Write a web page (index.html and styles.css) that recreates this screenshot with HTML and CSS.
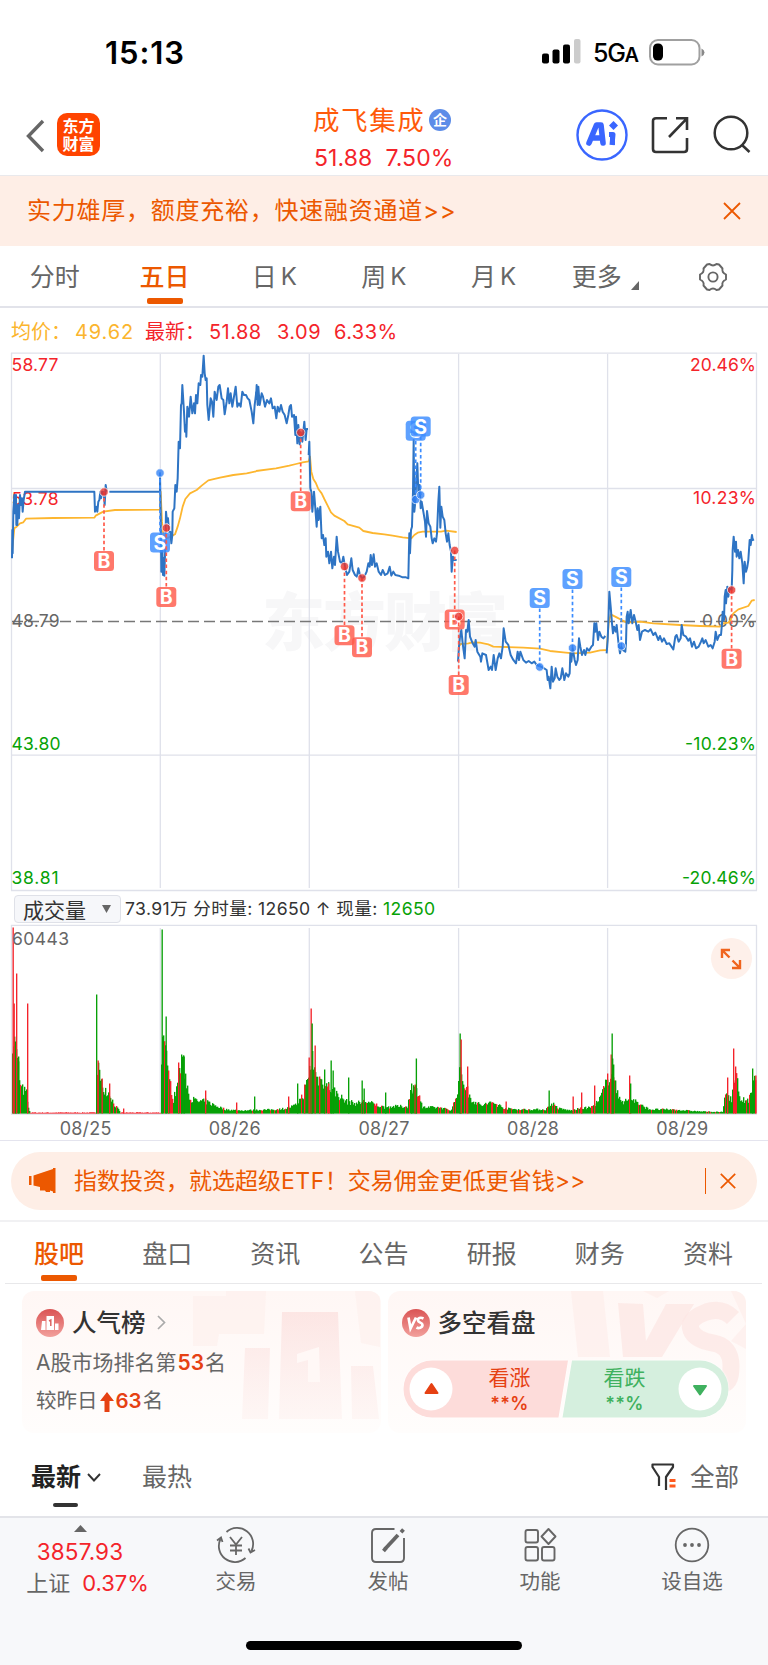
FILE: index.html
```html
<!DOCTYPE html>
<html lang="zh-CN">
<head>
<meta charset="utf-8">
<title>成飞集成</title>
<link rel="stylesheet" href="styles.css">
</head>
<body>
<header class="status">
  <span class="time">15:13</span>
  <div class="status-right">
    <svg class="signal" width="39" height="25" viewBox="0 0 39 25"><rect x="0" y="14.500" width="7" height="10" rx="2"/><rect x="10.500" y="10.500" width="7" height="14" rx="2"/><rect x="21" y="5.500" width="7" height="19" rx="2"/><rect x="32" y="0" width="6.500" height="24.500" rx="2" fill="#ccc"/></svg>
    <span class="net">5G<small>A</small></span>
    <svg width="56" height="27" viewBox="0 0 56 27"><rect x="1" y="1" width="49.500" height="24.500" rx="8" fill="none" stroke="#a0a0a0" stroke-width="2"/><rect x="4" y="4.500" width="10" height="17" rx="4.500"/><path d="M52.500 9.500q3 1.500 3 4t-3 4z" fill="#888"/></svg>
  </div>
</header>

<nav class="nav">
  <svg class="back" width="20" height="34" viewBox="0 0 20 34"><path d="M18 2 3.500 17 18 32" fill="none" stroke="#666" stroke-width="3.400"/></svg>
  <div class="brand"><span>东方</span><span>财富</span></div>
  <div class="title">
    <div class="name">成飞集成<i class="ent">企</i></div>
    <div class="quote"><span>51.88</span><span>7.50%</span></div>
  </div>
  <svg class="ai" width="52" height="52" viewBox="0 0 52 52"><circle cx="26" cy="26" r="24.500" fill="#fff" stroke="#3a66ff" stroke-width="2.400"/><path d="M13 34 20.500 16h4.500L27 34M16.500 29h9" fill="none" stroke="#3a66ff" stroke-width="5.600" stroke-linecap="round" stroke-linejoin="round"/><path d="M33 25.500h4L36 36M36.500 26v10" fill="none" stroke="#3a66ff" stroke-width="5" stroke-linejoin="round"/><path d="M37.500 12l4.500 4.500-4.500 4.500-4.500-4.500z" fill="#3a66ff"/></svg>
  <svg class="share" width="38" height="38" viewBox="0 0 38 38" fill="none" stroke="#333" stroke-width="2.600"><path d="M16 2.300H5Q2 2.300 2 5v28q0 3 3 3h28q3 0 3-3V22"/><path d="M25 2.300h11V14M36 2.300 18 21"/></svg>
  <svg class="search" width="38" height="38" viewBox="0 0 38 38" fill="none" stroke="#333" stroke-width="2.500"><circle cx="18" cy="18" r="16.300"/><path d="m29 30 7.500 7"/></svg>
</nav>

<section class="banner">
  <span>实力雄厚，额度充裕，快速融资通道&gt;&gt;</span>
  <svg width="18" height="18" viewBox="0 0 18 18"><path d="M1 1l16 16M17 1 1 17" stroke="#ec5800" stroke-width="1.800"/></svg>
</section>

<nav class="periods">
  <a>分时</a><a class="on">五日</a><a>日<b>K</b></a><a>周<b>K</b></a><a>月<b>K</b></a>
  <a class="more">更多<svg width="8" height="9" viewBox="0 0 8 9"><path d="M8 0v9H0z" fill="#666"/></svg></a>
  <a><svg width="30" height="30" viewBox="0 0 30 30" fill="none" stroke="#666" stroke-width="1.900" stroke-linejoin="round"><path d="M9 2.500 11.500 2Q15 4.800 18.500 2L21 2.500 24.500 6.500Q23.500 10.500 28 12.500V17.500Q23.500 19.500 24.500 23.500L21 27.500 18.500 28Q15 25.200 11.500 28L9 27.500 5.500 23.500Q6.500 19.500 2 17.500V12.500Q6.500 10.500 5.500 6.500Z"/><circle cx="15" cy="15" r="4.600"/></svg></a>
</nav>

<div class="legend"><span class="avg">均价：</span><span class="avg v1">49.62</span><span>最新：</span><span class="v2">51.88</span><span class="v3">3.09</span><span>6.33%</span></div>

<svg class="price" id="price" width="768" height="541" viewBox="0 351 768 541">
  <text x="508" y="645" text-anchor="end" class="mark" textLength="246">东方财富</text>
  <g class="grid"><path d="M11.500 353V890.500M160.300 354V888M309.300 354V888M458.600 354V888M607.600 354V888M756.500 353V890.500M11 353.200H757M12 488.500H756M12 755.200H756M11 890.500H757"/></g>
  <path d="M12 621.500H756" stroke="#777" stroke-width="1.300" stroke-dasharray="11 5"/>
  <g class="axis">
    <g class="up"><text x="11.500" y="370.500" textLength="47">58.77</text><text x="11.500" y="504.500" textLength="47">53.78</text><text x="756" y="370.500" text-anchor="end" textLength="66">20.46%</text><text x="756" y="504" text-anchor="end" textLength="63">10.23%</text></g>
    <g class="flat"><text x="11.500" y="627" textLength="48">48.79</text><text x="756" y="627" text-anchor="end" textLength="54">0.00%</text></g>
    <g class="down"><text x="11.500" y="750" textLength="49">43.80</text><text x="11.500" y="884" textLength="47">38.81</text><text x="756" y="750" text-anchor="end" textLength="71">-10.23%</text><text x="756" y="884" text-anchor="end" textLength="74">-20.46%</text></g>
  </g>
  <g id="lines"></g>
  <g id="trades"></g>
</svg>

<div class="volbar">
  <button class="pick">成交量<svg width="9" height="8" viewBox="0 0 9 8"><path d="M0 0h9L4.500 8z" fill="#666"/></svg></button>
  <span>73.91万 分时量: 12650 ↑ 现量: <em>12650</em></span>
</div>

<div class="volume">
  <svg id="volume" width="768" height="192" viewBox="0 924 768 192">
    <g class="grid"><path d="M11.500 925V1114M160.300 928V1113M309.300 928V1113M458.600 928V1113M607.600 928V1113M756.500 925V1114M11 925.400H757M11 1114H757"/></g>
    <g id="bars"></g>
    <text x="12" y="945" textLength="57" class="peak">60443</text>
  </svg>
  <div class="expand"><svg width="22" height="22" viewBox="0 0 22 22" fill="none" stroke="#f0641e" stroke-width="2.400"><path d="M2 10V2h8M2 2l7.500 7.500M20 12v8h-8M20 20l-7.500-7.500"/></svg></div>
</div>
<div class="dates"><span>08/25</span><span>08/26</span><span>08/27</span><span>08/28</span><span>08/29</span></div>

<section class="promo">
  <div class="pill">
    <svg class="horn" width="28" height="26" viewBox="0 0 28 26" fill="#ec5800"><path d="M1 8h2.500v9H1zM5.500 7.500 25 1V0h2.500v25H25v-1.500l-3-1V24h-4l-1-1.500h-5V19L5.500 17.500z"/></svg>
    <span>指数投资，就选超级<b>ETF</b>！交易佣金更低更省钱&gt;&gt;</span>
    <i></i>
    <svg width="16" height="16" viewBox="0 0 16 16"><path d="M.8.8l14.400 14.400M15.200.8.8 15.200" stroke="#ec5800" stroke-width="1.700"/></svg>
  </div>
</section>

<nav class="tabs"><a class="on">股吧</a><a>盘口</a><a>资讯</a><a>公告</a><a>研报</a><a>财务</a><a>资料</a></nav>

<section class="cards">
  <article class="card">
    <svg class="deco" width="358" height="142" viewBox="0 0 358 142">
      <defs><linearGradient id="fade" x1="0" y1="0" x2="0" y2="1"><stop offset="0" stop-color="#fbdedc" stop-opacity=".7"/><stop offset="1" stop-color="#fdf0ee" stop-opacity=".5"/></linearGradient></defs>
      <g fill="#fdeeeb" opacity=".55"><path d="M171 5h33V0h40l-2 43h-45l-2 12h-24zM333 0h25v56l-19-4z"/></g>
      <path fill="url(#fade)" d="M223 57h25l-2 71h-26zM260 21h56l4 107h-63zM329 75h22l6 53h-27z"/>
      <path fill="#fff8f6" d="m275 63 22-7 1 35h-12V69l-11 3z"/>
    </svg>
    <h3><svg width="28" height="28" viewBox="0 0 28 28"><defs><linearGradient id="red" x1="0" y1="0" x2="0" y2="1"><stop stop-color="#da5454"/><stop offset="1" stop-color="#f2a09c"/></linearGradient></defs><circle cx="14" cy="14" r="14" fill="url(#red)"/><path fill="#fff" d="M6 12h3.500v9H5zM10.500 7h7.500v14h-7.500zM19 14.500h3.500V21H19z"/><path d="m13 12 1.800-1v6" fill="none" stroke="#dc6462" stroke-width="1.500"/></svg><span>人气榜</span><svg class="go" width="9" height="15" viewBox="0 0 9 15"><path d="m1 1 6.500 6.500L1 14" fill="none" stroke="#aaa" stroke-width="1.700"/></svg></h3>
    <p>A股市场排名第<b>53</b>名</p>
    <p class="second">较昨日<svg width="14" height="20" viewBox="0 0 14 20"><path d="M7 0l7 9H9.500v11h-5V9H0z" fill="#e64113"/></svg><b>63</b>名</p>
  </article>
  <article class="card duel">
    <svg class="deco" width="358" height="142" viewBox="0 0 358 142"><path fill="#fdeeeb" opacity=".7" d="M183 0h32l7 66h-32zM255 0h26l-12 7zM343 0h15v58l-15-8 15-17z"/><path fill="#fce5e2" opacity=".7" d="m230 12 25 1 3 37 20-37h28l-32 53h-39z"/><path d="M345 27q-12-12-29-5t-13 17 22 13 18 23-10 17" fill="none" stroke="#fce6e3" stroke-width="17" opacity=".7"/></svg>
    <h3><svg width="28" height="28" viewBox="0 0 28 28"><circle cx="14" cy="14" r="14" fill="url(#red)"/><path d="m6.500 8.500 2 11L14 8.500M21.500 9.500c-3-1.500-6-.5-5.500 2s4.500 1.800 4.500 4.500-4 3.800-6 2.500" fill="none" stroke="#fff" stroke-width="2.700"/></svg><span>多空看盘</span></h3>
    <div class="vote">
      <svg width="328" height="60" viewBox="0 0 328 60"><path d="M30 1.500h136L156.500 58.500H30a28.500 28.500 0 0 1 0-57z" fill="#fddcda"/><path d="M170 1.500h128a28.500 28.500 0 0 1 0 57H160.500z" fill="#d5efde"/><circle cx="29" cy="30" r="21.500" fill="#fff"/><circle cx="298" cy="30" r="21.500" fill="#fff"/><path d="M23.500 34h12L29.500 25z" fill="#e64113" stroke="#e64113" stroke-width="2" stroke-linejoin="round"/><path d="M292 27h12l-6 8.500z" fill="#3fb15f" stroke="#3fb15f" stroke-width="2" stroke-linejoin="round"/></svg>
      <div class="bull"><span>看涨</span><b>**%</b></div>
      <div class="bear"><span>看跌</span><b>**%</b></div>
    </div>
  </article>
</section>

<div class="sort">
  <a class="on">最新<svg width="14" height="9" viewBox="0 0 14 9"><path d="m1 1 6 6.500L13 1" fill="none" stroke="#333" stroke-width="1.900"/></svg></a>
  <a>最热</a>
  <a class="all"><svg width="26" height="28" viewBox="0 0 26 28" fill="none" stroke="#333" stroke-width="2.200" stroke-linejoin="round"><path d="M8 23V14L1.500 4V1.500H22V4l-7 10v13"/><path d="M18.500 17.500h6M18.500 23h6" stroke="#ff5a1e" stroke-width="2.800"/></svg>全部</a>
</div>

<footer class="dock">
  <div class="index"><svg width="13" height="7" viewBox="0 0 13 7"><path d="M6.500 0 13 7H0z" fill="#666"/></svg><strong>3857.93</strong><span>上证<em>0.37%</em></span></div>
  <a><svg width="40" height="36" viewBox="0 0 40 36" fill="none" stroke="#666" stroke-width="1.800"><path d="M10.500 5A16 16 0 0 1 35.500 24M29.500 31A16 16 0 0 1 4.500 12M1 13.500l4-3 1.500 4.500M32.500 21.500 34.500 25.500 39 23"/><path d="M14 10l6 7.500L26 10M20 17.500V28M14 18.500h12M14 23.500h12"/></svg>交易</a>
  <a><svg width="40" height="36" viewBox="0 0 40 36" fill="none" stroke="#666" stroke-width="1.900"><path d="M26.500 2H8Q4 2 4 6v25q0 4 4 4h24q4 0 4-4V11"/><path d="m17 22 13-14" stroke-width="3.800"/><path d="m15.500 24 2.500-3M33 5.200l2.500-2.700" stroke-width="3.800"/></svg>发帖</a>
  <a><svg width="40" height="36" viewBox="0 0 40 36" fill="none" stroke="#666" stroke-width="1.900"><rect x="5.500" y="3" width="12.500" height="12.500" rx="2"/><rect x="5.500" y="20" width="12.500" height="13.500" rx="2"/><rect x="22" y="20" width="12.500" height="13.500" rx="2"/><path d="m28.500 2 7 7.500-7 7.500-7-7.500z" stroke-linejoin="round"/></svg>功能</a>
  <a><svg width="40" height="36" viewBox="0 0 40 36" fill="none" stroke="#666" stroke-width="1.800"><circle cx="20" cy="18" r="16.300"/><g fill="#666" stroke="none"><circle cx="13" cy="18" r="1.900"/><circle cx="20" cy="18" r="1.900"/><circle cx="27" cy="18" r="1.900"/></g></svg>设自选</a>
  <div class="home"></div>
</footer>
<script src="chart.js"></script>
</body>
</html>
```

FILE: styles.css
```css
* { box-sizing: border-box; }
body { margin: 0; width: 768px; height: 1665px; overflow: hidden; background: #fff; color: #666; font-family: Inter, "Noto Sans CJK SC", sans-serif; font-size: 25px; line-height: 1; }
svg { display: block; flex: none; }
b, h3, i, em, strong { font-weight: inherit; font-style: normal; }

.status { height: 96px; display: flex; justify-content: space-between; padding: 36px 63px 0 105px; color: #000; }
.time { font-size: 31px; font-weight: 600; line-height: 34px; letter-spacing: .9px; }
.status-right { display: flex; align-items: flex-start; padding-top: 3px; }
.net { width: 56px; margin-left: 12px; font-size: 25px; font-weight: 500; line-height: 29px; letter-spacing: -1.300px; white-space: nowrap; }
.net small { font-size: 20px; font-weight: 600; }

.nav { height: 80px; border-bottom: 1.500px solid #e9e9ec; display: flex; position: relative; padding-left: 24.500px; }
.back { margin-top: 22.500px; }
.brand { width: 43px; height: 43px; margin: 17px 0 0 12.500px; border-radius: 10px; background: #ff4400; color: #fff; display: flex; flex-direction: column; align-items: center; padding-top: 4px; font-size: 16px; font-weight: 700; line-height: 18px; }
.title { width: 180px; margin-left: 213px; }
.name { display: flex; align-items: center; color: #ff5a0a; font-size: 26.500px; line-height: 28px; margin-top: 10px; letter-spacing: 1.600px; white-space: nowrap; }
.ent { width: 22px; height: 22px; margin-left: 3.500px; border-radius: 50%; background: #5c8ce8; color: #fff; font-size: 14px; line-height: 21px; text-align: center; letter-spacing: 0; font-weight: 700; }
.quote { display: flex; gap: 13px; margin-top: 12px; padding-left: 1px; color: #f4242a; font-size: 23px; line-height: 24px; letter-spacing: .1px; }
.ai { margin: 13px 0 0 83px; }
.share { margin: 20px 0 0 23px; }
.search { margin: 19px 0 0 24px; }

.banner { height: 70px; display: flex; align-items: center; justify-content: space-between; padding: 0 27px 0 27px; background: #feeee6; color: #ec5800; font-size: 24px; letter-spacing: .75px; }
.periods { height: 62px; display: flex; border-bottom: 2px solid #e2e3ea; }
.periods a { width: 109.700px; display: flex; align-items: center; justify-content: center; position: relative; padding-top: 2px; }
.periods b { margin-left: 4px; font-size: 24px; }
.periods .more svg { margin: 17px -4px 0 9px; }
.on { color: #ec5800; font-weight: 500; }
.periods .on::after, .tabs .on::after { content: ""; position: absolute; left: 50%; bottom: 2.500px; width: 36px; height: 5.500px; margin-left: -18px; border-radius: 2px; background: #ec5800; }
.legend { height: 43px; display: flex; align-items: center; padding: 4px 0 0 11px; color: #f4242a; font-size: 20px; letter-spacing: .45px; white-space: nowrap; }
.legend .avg { color: #fbb52e; width: 64px; letter-spacing: 0; }
.legend .v1 { width: 70px; letter-spacing: .9px; }
.legend .v2 { width: 68px; }
.legend span:nth-child(3) { width: 64px; letter-spacing: 0; }
.legend .v3 { width: 57px; }

.grid { fill: none; stroke: #dfe1ea; stroke-width: 1.300; }
.mark { font: 900 63px "Noto Sans CJK SC", sans-serif; fill: #f7f7f8; }
.axis, .peak { font-size: 17.500px; }
.up { fill: #f4242a; } .flat, .peak { fill: #666; } .down { fill: #06a206; }
.line { fill: none; stroke: #2e74c4; stroke-width: 6; stroke-linejoin: round; }
.mean { fill: none; stroke: #fdb62f; stroke-width: 5.400; stroke-linejoin: round; }
.tag { font: 700 19.500px Inter, sans-serif; fill: #fff; text-anchor: middle; }

.volbar { height: 32px; display: flex; align-items: center; padding: 1px 0 0 14px; color: #333; font-size: 17.600px; letter-spacing: .38px; white-space: nowrap; }
.volbar em { color: #06a206; }
.pick { width: 107px; height: 28px; margin-right: 4px; padding: 0 9px 0 8px; display: flex; align-items: center; justify-content: space-between; border: 1.500px solid #dfe1e8; border-radius: 4px; background: #f6f7fa; color: #333; font: 21px "Noto Sans CJK SC", sans-serif; line-height: 22px; }
.volume { height: 192px; position: relative; }
.expand { position: absolute; left: 710.500px; top: 14px; width: 41px; height: 41px; border-radius: 50%; background: #fef0ea; display: flex; align-items: center; justify-content: center; padding-right: 1px; }
.dates { height: 25px; display: flex; padding: 0 11px; font-size: 18px; line-height: 25px; letter-spacing: .2px; border-bottom: 1px solid #e4e4ee; }
.dates span { width: 149.200px; text-align: center; }

.promo { height: 81px; padding: 11px 11px 0; border-bottom: 2px solid #f1f1f3; }
.pill { height: 58px; border-radius: 29px; background: #feeee6; color: #ec5800; display: flex; align-items: center; padding: 0 21px 0 17px; font-size: 23px; white-space: nowrap; }
.pill span { flex: 1; margin-left: 18px; letter-spacing: 0; }
.pill b { letter-spacing: .5px; }
.pill i { width: 1.500px; height: 26px; margin-right: 14px; background: #ec5800; }
.tabs { height: 62px; margin: 0 6px 0 5px; display: flex; border-bottom: 1.500px solid #e8e8ea; }
.tabs a { flex: 1; text-align: center; line-height: 64px; position: relative; }

.cards { height: 148px; display: flex; gap: 7px; padding: 7px 22px 0; }
.card { width: 358.500px; height: 142px; border-radius: 12px; overflow: hidden; position: relative; background: linear-gradient(#fff7f5, #fffdfc); padding: 17.500px 14px 0; }
.deco { position: absolute; left: 0; top: 0; }
.card h3 { position: relative; margin: 0; height: 28px; display: flex; align-items: center; color: #333; font-size: 24.500px; font-weight: 500; gap: 8px; }
.card h3 span { padding-top: 2px; }
.go { margin-left: 3px; }
.card p { position: relative; margin: 13px 0 0; height: 26px; display: flex; align-items: center; font-size: 21px; white-space: nowrap; }
.card p b { color: #e64113; font-weight: 600; margin: 0 1px; }
.card .second { margin-top: 13px; font-size: 20.500px; }
.second svg { margin: 0 1px 0 2px; }
.vote { position: relative; width: 328px; height: 60px; margin-top: 22px; }
.vote svg { filter: drop-shadow(0 0 1px #fff); }
.bull, .bear { position: absolute; top: 8px; left: 78px; width: 60px; text-align: center; font-size: 21px; color: #e64113; line-height: 21px; }
.bear { left: 193px; color: #3fb15f; }
.bull b, .bear b { display: block; font-size: 18px; font-weight: 600; margin-top: 5px; letter-spacing: .4px; }

.sort { height: 86px; display: flex; align-items: center; padding: 6px 29px 0 31px; border-bottom: 2px solid #e3e4e9; }
.sort a { display: flex; align-items: center; position: relative; }
.sort .on { color: #222; font-weight: 700; gap: 6px; margin-right: 41px; }
.sort .on::after { content: ""; position: absolute; left: 22px; top: 38px; width: 25px; height: 4px; border-radius: 2px; background: #333; }
.sort .all { margin-left: auto; gap: 13px; font-size: 24.500px; }
.dock { height: 147px; display: flex; position: relative; background: #f7f8fa; font-size: 20.500px; }
.dock a { width: 152px; display: flex; flex-direction: column; align-items: center; padding-top: 9px; }
.dock a svg { margin-bottom: 9px; }
.index { width: 160px; padding: 7px 0 0 0; display: flex; flex-direction: column; align-items: center; font-size: 22px; color: #f4242a; }
.index svg { margin-left: 1px; }
.index strong { margin-top: 9px; font-size: 22.500px; letter-spacing: .1px; }
.index span { margin-top: 8px; padding-left: 15px; color: #666; white-space: nowrap; }
.index em { margin-left: 12px; color: #f4242a; }
.home { position: absolute; left: 246px; top: 123px; width: 276px; height: 9px; border-radius: 5px; background: #000; }
```

FILE: chart.js
```js
// Each segment is plotted at three units per pixel from its own origin.
const segments = [
  { at: [0, 345], price: [
    "36,640 37,555 38,625 40,500 43,450 45,505 48,450 49,540 52,540 54,480 57,520 60,450 63,480 66,460 68,500 71,465 75,440 283,440 285,500 290,485 292,500 295,470 298,465 301,440 303,460 307,440 311,442 314,480 317,420 320,440",
    "328,440 480,440 480,385 482,500 484,680 487,600 489,690 491,640 493,692 496,600 498,500 501,530 504,520 507,560 511,560 514,595 517,570 518,500 523,490 526,420 530,440 533,400 536,290 540,310 543,180 545,175 547,120 552,200 555,260 558,240 559,275 562,185 567,215 572,155 577,205 582,175 585,205 588,150 592,175 596,115 601,120 603,90 607,95 611,32 614,85 617,105 620,100 622,180 626,225 632,160 636,170 640,215 644,140 650,165 655,125 659,120 665,160 670,165 674,208 680,170 684,130 688,175 692,145 697,185 702,155 707,125 712,185 717,175 722,185 727,140 732,150 738,150 743,160 748,165 755,200 760,235 764,180 769,140"],
    mean: "36,620 43,550 50,545 60,535 70,532 78,521 160,519 283,518 287,512 310,500 345,495 480,494 482,440 486,530 490,570 500,580 512,575 525,568 533,545 540,520 548,485 556,462 570,445 590,435 605,422 625,406 660,398 700,390 740,385 768,379" },
  { at: [256, 345], price: [
    "0,165 2,120 5,180 7,125 11,180 17,145 21,155 27,185 33,165 40,175 45,160 50,190 56,185 61,220 65,185 70,200 75,180 80,200 86,210 92,235 97,210 101,185 105,180 108,215 114,210 118,270 120,215 124,295 127,240 131,298 134,262 139,290 145,230 149,285 152,252 156,252",
    "158,330 160,290 163,430 166,440 169,500 174,440 178,490 182,545 185,490 188,525 193,485 197,580 201,570 205,600 209,580 211,635 216,620 220,655 225,620 229,670 234,635 237,660 242,575 246,620 252,650 258,655 262,635 267,665 273,690 280,680 286,640 290,675 297,690 303,695 307,670 312,690 318,700 325,695 332,680 337,655 341,665 344,630 348,660 353,628 357,665 362,655 368,680 375,690 380,675 387,690 395,685 401,665 406,692 412,680 418,690 428,692 440,697 450,697 457,700 460,565 462,625 465,555 468,545 471,440 473,285 475,500 478,470 481,400 484,355 487,440 491,420 494,490 497,470 502,500 507,530 510,575 513,498 518,535 523,545 527,580 530,595 535,580 540,590 543,565 547,470 550,425 553,548 556,485 560,515 565,525 569,565 573,590 577,565 581,600 585,620 587,680 591,635 594,645 602,645"],
    mean: "0,378 60,370 100,362 120,357 140,352 158,349 162,335 166,380 172,402 180,415 187,432 197,445 205,462 215,482 225,502 235,512 265,528 275,538 310,548 322,558 350,564 385,568 410,572 440,577 466,580 475,570 485,563 500,560 555,560 570,557 602,561" },
  { at: [440, 480], price: [
    "54,545 57,500 60,470 64,450 68,490 74,535 78,450 82,455 86,420 90,470 98,490 104,500 107,480 112,515 121,530 123,545 127,520 138,525 146,570 152,560 156,570 161,525 167,570 173,535 178,520 183,535 188,500 191,445 197,485 205,495 212,525 220,540 228,550 233,515 237,540 241,515 250,540 258,548 266,543 275,550 283,545 290,555 298,558 308,562 320,570 323,600 326,590 331,625 335,560 339,605 344,595 347,565 352,590 358,600 362,595 367,565 373,600 378,580 385,590 389,580 391,520 394,545 398,505 404,540 408,555 413,540 417,475 421,500 426,525 432,510 436,525 441,505 447,512 454,500 459,495 463,430 466,455 469,430 474,480 478,455 484,470 490,475 496,468",
    "500,520 503,480 506,400 508,335 512,380 516,430 519,460 522,440 527,455 530,435 535,485 540,520 544,500 548,510 556,515 558,490 560,410 563,395 566,430 572,390 577,430 582,405 588,430 592,450 596,435 600,480 606,455 615,450 625,455 632,448 640,465 646,458 655,480 660,468 666,485 672,475 680,492 688,490 700,508 706,470 710,465 716,485 722,475 725,435 730,465 738,470 745,482 750,475 756,500 762,485 768,505 776,500 783,485 787,475 791,490 797,480 805,500 812,495 818,505 824,485 827,455 832,480 838,465 843,465 846,430 848,395 852,420 854,350 857,330 858,370 862,320 865,350 868,325 875,330 877,270 878,210 881,170 885,215 888,185 890,230 894,210 898,235 902,215 907,250 911,310 914,245 918,275 922,260 925,240 929,180 932,195 936,165 938,180 942,178"],
    mean: "56,500 62,492 85,490 97,487 120,488 145,493 160,500 200,501 250,503 300,506 330,513 370,517 400,520 450,518 480,511 500,510 506,430 512,403 530,412 545,420 560,428 600,425 640,430 720,435 780,438 840,440 850,430 865,428 872,420 880,400 895,388 925,378 935,362 944,360" }
];
document.getElementById("lines").innerHTML = segments.map(s =>
  `<g transform="translate(${s.at}) scale(.33333)"><polyline class="mean" points="${s.mean}"/>` +
  s.price.map(p => `<polyline class="line" points="${p}"/>`).join("") + "</g>").join("");

// [side, x, y of the fill, y of the tag]
const trades = [
  ["B", 104, 492, 561], ["S", 160, 473, 542.5], ["B", 166.3, 528, 597],
  ["B", 300.7, 432.5, 501.3], ["B", 344.5, 566.5, 635.3], ["B", 362, 578, 647.3],
  ["S", 415.7, 499.5, 430.7], ["S", 420.7, 495, 426.5], ["B", 454.7, 550.5, 619.5],
  ["B", 458.7, 616.5, 685], ["S", 539.7, 667, 598], ["S", 572.5, 648, 579],
  ["S", 621.3, 646, 577], ["B", 731.6, 590, 658.8]
];
document.getElementById("trades").innerHTML = trades.map(([side, x, y, t]) => {
  const buy = side === "B", box = buy ? "#ff5a4a" : "#3b8cff", dot = buy ? "#e8312a" : "#2f80f5";
  return `<path d="M${x} ${y}V${t + (buy ? -10 : 10)}" stroke="${box}" stroke-width="1.700" stroke-dasharray="3.500 2.600"/>` +
    `<rect x="${x - 10}" y="${t - 10}" width="20" height="20" rx="3.500" fill="${box}" opacity=".82"/>` +
    `<text class="tag" x="${x}" y="${t + 7}">${side}</text>` +
    `<circle cx="${x}" cy="${y}" r="4.200" fill="${dot}" fill-opacity=".78" stroke="#fff" stroke-width=".7"/>`;
}).join("");

// Background level of the volume, [x, height].
const level = [[12,80],[13,75],[18,45],[20,26],[26,20],[28,5],[30,1],[95,1],[96,50],[98,48],[100,30],[105,24],[110,18],[113,10],[117,5],[120,1],[160,1],[161,48],[163,90],[165,60],[167,44],[170,27],[173,14],[176,25],[178,38],[181,44],[183,48],[185,38],[188,20],[190,15],[197,12],[205,12],[212,9],[225,4],[240,3],[275,4],[285,5],[295,8],[300,15],[304,20],[308,38],[312,55],[316,35],[324,30],[334,22],[345,12],[355,10],[365,12],[384,6],[392,7],[407,7],[411,27],[415,24],[418,22],[422,6],[440,6],[450,3],[455,14],[458,30],[460,45],[463,32],[470,15],[480,8],[492,11],[505,5],[520,4],[545,4],[552,10],[558,5],[570,3],[580,5],[590,6],[598,12],[606,30],[612,50],[616,20],[623,12],[633,14],[640,8],[650,4],[670,4],[700,2],[722,1.5],[725,20],[731,15],[735,40],[740,14],[748,12],[752,25],[756,38]];
const spikes = [[12.5,186,1],[13.5,110,1],[15,72,0],[16,140,1],[18,57,0],[27,110,1],[96,119,0],[97.5,53,1],[101.500,35,1],[109,30,1],[123,5,1],[161.500,184,0],[165.5,97,0],[168,43,1],[178,51,1],[181,59,0],[183.5,57,0],[205,23,1],[236,11,1],[254,17,0],[288,17,1],[297,30,0],[304,29,1],[308.5,56,1],[310.500,105,1],[311.500,90,0],[314.500,68,1],[319,37,1],[324,44,0],[328,30,1],[330.500,53,0],[332.500,43,0],[348,36,0],[361.500,33,0],[363.500,25,0],[385,21,0],[411,30,0],[414.5,29,1],[415.700,55,0],[459.500,80,0],[460.500,74,1],[467,47,1],[505.500,12,1],[548.500,23,0],[572.500,17,1],[581,21,1],[594,28,1],[607,40,1],[610.5,59,1],[611.500,80,0],[613,49,0],[629,38,1],[630,30,0],[727,36,1],[733,65,1],[735,47,1],[752,45,0],[755.200,38,1]];
let seed = 7;
const rand = () => (seed = (seed * 16807) % 2147483647) / 2147483647;
const bar = (x, h, red) => `<rect x="${x}" y="${(1113.5 - h).toFixed(1)}" width="1.350" height="${h.toFixed(1)}" fill="${red ? "#f4222a" : "#06a006"}"/>`;
let out = "", k = 0;
for (let x = 12; x < 756; x++) {
  while (k < level.length - 2 && level[k + 1][0] <= x) k++;
  const [x0, h0] = level[k], [x1, h1] = level[k + 1];
  const base = h0 + (h1 - h0) * (x - x0) / (x1 - x0);
  const thin = base < 1.6 && x < 161;
  const h = thin ? .5 + rand() * .8 : base * (.75 + rand() * .5);
  out += bar(x, h, thin || rand() < .14);
}
document.getElementById("bars").innerHTML = out + spikes.map(s => bar(...s)).join("");
```
